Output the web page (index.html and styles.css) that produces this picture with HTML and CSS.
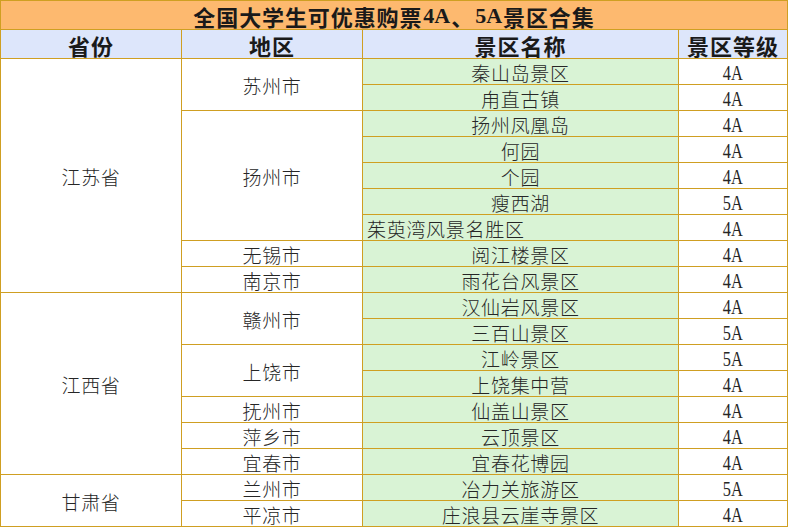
FILE: index.html
```html
<!DOCTYPE html>
<html lang="zh-CN">
<head>
<meta charset="utf-8">
<title>全国大学生可优惠购票4A、5A景区合集</title>
<link rel="stylesheet" href="styles.css">
</head>
<body>
<div class="sheet">
  <div class="cell title">全国大学生可优惠购票<span class="lat">4A</span>、<span class="lat">5A</span>景区合集</div>
  <div class="cell head">省份</div>
  <div class="cell head">地区</div>
  <div class="cell head">景区名称</div>
  <div class="cell head">景区等级</div>

  <div class="cell prov span9">江苏省</div>
  <div class="cell city span2">苏州市</div>
  <div class="cell spot">秦山岛景区</div><div class="cell lvl"><span>4A</span></div>
  <div class="cell spot">甪直古镇</div><div class="cell lvl"><span>4A</span></div>
  <div class="cell city span5">扬州市</div>
  <div class="cell spot">扬州凤凰岛</div><div class="cell lvl"><span>4A</span></div>
  <div class="cell spot">何园</div><div class="cell lvl"><span>4A</span></div>
  <div class="cell spot">个园</div><div class="cell lvl"><span>4A</span></div>
  <div class="cell spot">瘦西湖</div><div class="cell lvl"><span>5A</span></div>
  <div class="cell spot left">茱萸湾风景名胜区</div><div class="cell lvl"><span>4A</span></div>
  <div class="cell city">无锡市</div>
  <div class="cell spot">阅江楼景区</div><div class="cell lvl"><span>4A</span></div>
  <div class="cell city">南京市</div>
  <div class="cell spot">雨花台风景区</div><div class="cell lvl"><span>4A</span></div>

  <div class="cell prov span7">江西省</div>
  <div class="cell city span2">赣州市</div>
  <div class="cell spot">汉仙岩风景区</div><div class="cell lvl"><span>4A</span></div>
  <div class="cell spot">三百山景区</div><div class="cell lvl"><span>5A</span></div>
  <div class="cell city span2">上饶市</div>
  <div class="cell spot">江岭景区</div><div class="cell lvl"><span>5A</span></div>
  <div class="cell spot">上饶集中营</div><div class="cell lvl"><span>4A</span></div>
  <div class="cell city">抚州市</div>
  <div class="cell spot">仙盖山景区</div><div class="cell lvl"><span>4A</span></div>
  <div class="cell city">萍乡市</div>
  <div class="cell spot">云顶景区</div><div class="cell lvl"><span>4A</span></div>
  <div class="cell city">宜春市</div>
  <div class="cell spot">宜春花博园</div><div class="cell lvl"><span>4A</span></div>

  <div class="cell prov span2">甘肃省</div>
  <div class="cell city">兰州市</div>
  <div class="cell spot">冶力关旅游区</div><div class="cell lvl"><span>5A</span></div>
  <div class="cell city">平凉市</div>
  <div class="cell spot">庄浪县云崖寺景区</div><div class="cell lvl"><span>4A</span></div>
</div>
</body>
</html>
```

FILE: styles.css
```css
html, body {
  margin: 0;
  padding: 0;
  background: #ffffff;
}

.sheet {
  width: 788px;
  height: 527px;
  box-sizing: border-box;
  padding: 1px;
  background: #cf9f22;
  display: grid;
  grid-template-columns: 180px 180px 315px 108px;
  grid-template-rows: 28px 28px repeat(18, 25px);
  gap: 1px;
  font-family: "Noto Sans CJK SC", "Noto Sans", sans-serif;
  color: #262626;
}

.cell {
  background: #ffffff;
  display: flex;
  align-items: center;
  justify-content: center;
  font-size: 19px;
  font-weight: 300;
  letter-spacing: 0.7px;
  line-height: 20px;
  padding-top: 2px;
  box-sizing: border-box;
  white-space: nowrap;
}

.title {
  grid-column: 1 / -1;
  background: #fdb96f;
  font-size: 22px;
  font-weight: 700;
  letter-spacing: 0.9px;
  line-height: 24px;
  color: #1a1a1a;
  padding-top: 1px;
}

.title .lat {
  font-family: "Liberation Serif", serif;
  font-weight: 700;
  font-size: 22px;
  letter-spacing: 0;
  margin: 0 1px;
}

.head {
  background: #dde6fb;
  font-size: 22px;
  font-weight: 700;
  letter-spacing: 1px;
  line-height: 24px;
  color: #1a1a1a;
  padding-top: 1px;
}

.spot {
  background: #d9f3d5;
}

.spot.left {
  justify-content: flex-start;
  padding-left: 4px;
}

.lvl span {
  display: inline-block;
  font-family: "Liberation Serif", serif;
  font-weight: 400;
  font-size: 21px;
  letter-spacing: 0;
  transform: scaleX(0.78);
}

.span9 { grid-row: span 9; }
.span7 { grid-row: span 7; }
.span5 { grid-row: span 5; }
.span2 { grid-row: span 2; }
```
